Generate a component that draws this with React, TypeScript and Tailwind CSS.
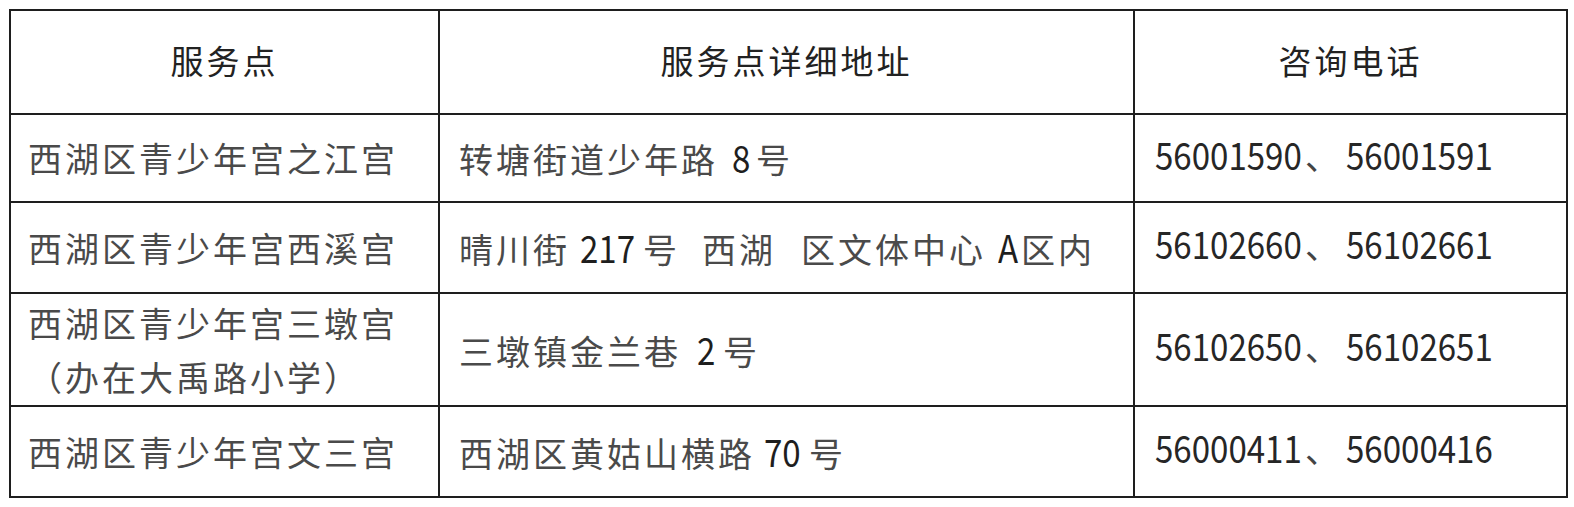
const CJK = "font-['Noto_Sans_CJK_SC',sans-serif]";

// narrow latin digits: Noto digits squeezed horizontally
function Narrow({ text, gap }: { text: string; gap: string }) {
  return (
    <span
      className={`inline-block whitespace-nowrap ${gap} text-[38px] tracking-normal text-[#1e1e1e]`}
      style={{ width: text.length * 19 }}
    >
      <span className="inline-block origin-left scale-x-[0.87]">{text}</span>
    </span>
  );
}

type Part = string | { n: string; gap: string } | { t: string; gap: string };

type Row = {
  name: string[];
  addr: Part[];
  tel: [string, string];
  h: string;
};

const rows: Row[] = [
  {
    name: ["西湖区青少年宫之江宫"],
    addr: ["转塘街道少年路", { n: "8", gap: "ml-[14px]" }, { t: "号", gap: "ml-[5px]" }],
    tel: ["56001590", "56001591"],
    h: "h-[88px]",
  },
  {
    name: ["西湖区青少年宫西溪宫"],
    addr: [
      "晴川街",
      { n: "217", gap: "ml-[10px]" },
      { t: "号", gap: "ml-[6px]" },
      { t: "西湖", gap: "ml-[22px]" },
      { t: "区文体中心", gap: "ml-[25px]" },
      { n: "A", gap: "ml-[12px]" },
      { t: "区内", gap: "ml-[4px]" },
    ],
    tel: ["56102660", "56102661"],
    h: "h-[91px]",
  },
  {
    name: ["西湖区青少年宫三墩宫", "（办在大禹路小学）"],
    addr: ["三墩镇金兰巷", { n: "2", gap: "ml-[16px]" }, { t: "号", gap: "ml-[7px]" }],
    tel: ["56102650", "56102651"],
    h: "h-[113px]",
  },
  {
    name: ["西湖区青少年宫文三宫"],
    addr: ["西湖区黄姑山横路", { n: "70", gap: "ml-[9px]" }, { t: "号", gap: "ml-[7px]" }],
    tel: ["56000411", "56000416"],
    h: "h-[91px]",
  },
];

const cell = "border-2 border-[#1e1e1e] align-middle";

export default function App() {
  return (
    <div className="h-[507px] bg-white pl-[9px] pt-[9px]">
      <table className="w-[1557px] table-fixed border-collapse">
        <colgroup>
          <col className="w-[429px]" />
          <col className="w-[695px]" />
          <col className="w-[433px]" />
        </colgroup>
        <thead>
          <tr className="h-[104px]">
            {["服务点", "服务点详细地址", "咨询电话"].map((t) => (
              <th
                key={t}
                className={`${cell} ${CJK} pb-[2px] text-center text-[33px] font-normal tracking-[3px] text-[#222]`}
              >
                {t}
              </th>
            ))}
          </tr>
        </thead>
        <tbody>
          {rows.map((r) => (
            <tr key={r.tel[0]} className={r.h}>
              <td className={`${cell} ${CJK} pl-[17px] text-[34px] leading-[54px] tracking-[3px] text-[#4a4a4a]`}>
                {r.name.map((l) => (
                  <div key={l}>{l}</div>
                ))}
              </td>
              <td className={`${cell} ${CJK} whitespace-nowrap pl-[19px] text-[34px] leading-[54px] tracking-[3px] text-[#4a4a4a]`}>
                {r.addr.map((p, i) =>
                  typeof p === "string" ? (
                    <span key={i}>{p}</span>
                  ) : "n" in p ? (
                    <Narrow key={i} text={p.n} gap={p.gap} />
                  ) : (
                    <span key={i} className={`inline-block ${p.gap}`}>
                      {p.t}
                    </span>
                  )
                )}
              </td>
              <td className={`${cell} ${CJK} whitespace-nowrap pl-[20px] leading-[54px]`}>
                <span className="inline-block w-[150px] text-[38px] text-[#262626]">
                  <span className="inline-block origin-left scale-x-[0.87]">{r.tel[0]}</span>
                </span>
                <span className="inline-block w-[41px] text-[34px] text-[#444]">、</span>
                <span className="inline-block w-[150px] text-[38px] text-[#262626]">
                  <span className="inline-block origin-left scale-x-[0.87]">{r.tel[1]}</span>
                </span>
              </td>
            </tr>
          ))}
        </tbody>
      </table>
    </div>
  );
}
